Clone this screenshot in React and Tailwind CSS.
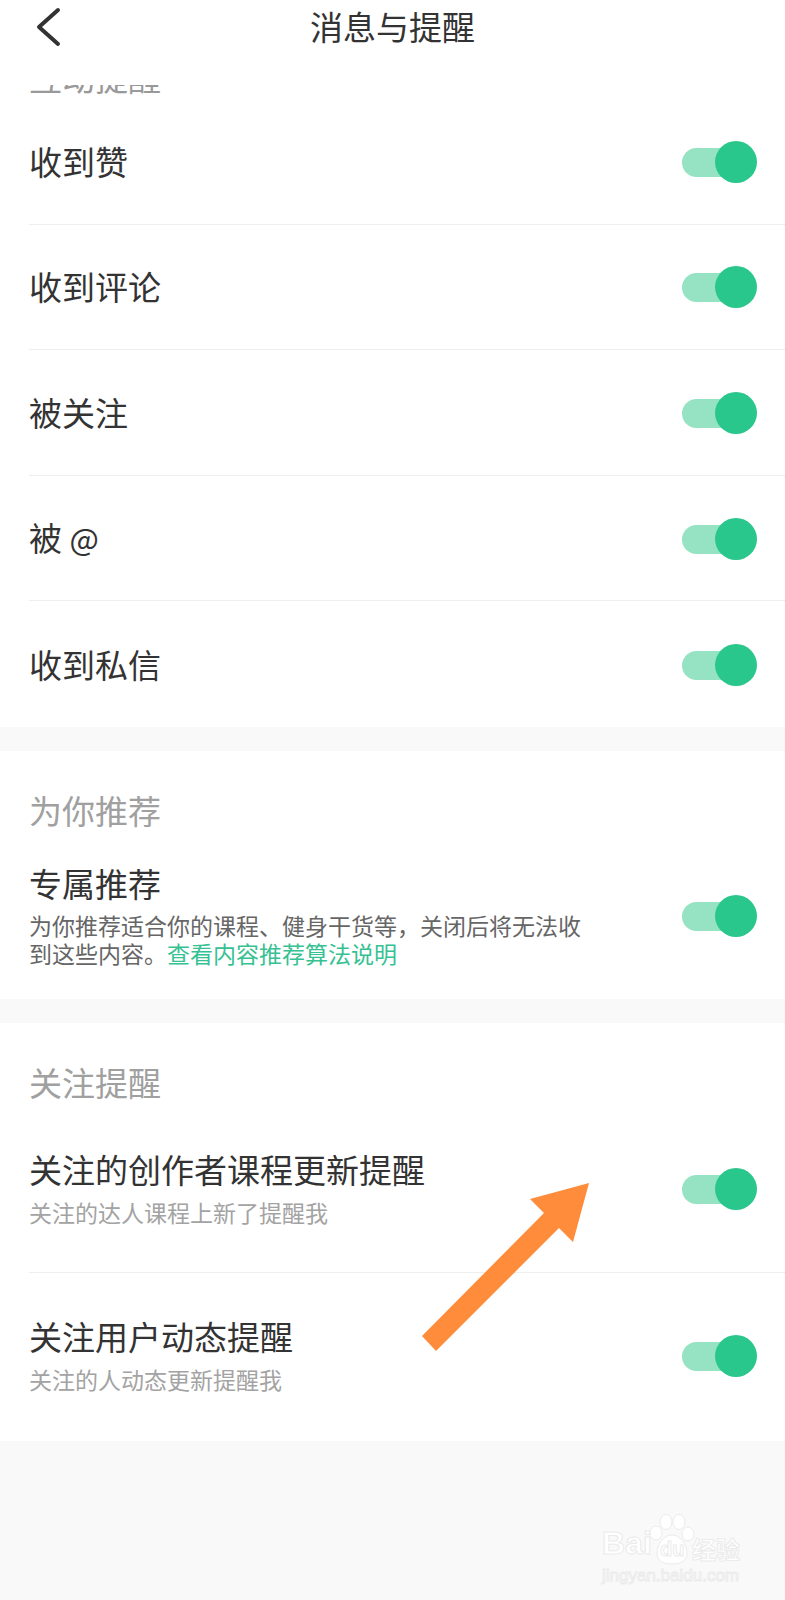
const FONT = '"Noto Sans CJK SC", "Noto Sans", sans-serif';

function Toggle({ className = '' }) {
  return (
    <div className={`relative h-[42px] w-[75px] shrink-0 ${className}`}>
      <div className="absolute left-0 top-[7px] h-[29px] w-[60px] rounded-full bg-[#95e3c3]" />
      <div className="absolute right-0 top-0 h-[42px] w-[42px] rounded-full bg-[#29c78b]" />
    </div>
  );
}

function SimpleRow({ label, last }) {
  return (
    <div className={`ml-[29px] flex h-[125.6px] items-center justify-between pr-[28px] pt-[1px] ${last ? '' : 'border-b border-[#eeeeee]'}`}>
      <span className="mb-[2px] text-[33px] leading-[44px] text-[#333333]">{label}</span>
      <Toggle />
    </div>
  );
}

function SubRow({ title, sub, className }) {
  return (
    <div className={`ml-[29px] flex items-center justify-between pr-[28px] ${className}`}>
      <div>
        <div className="text-[33px] leading-[44px] text-[#333333]">{title}</div>
        <div className="mt-[6px] text-[23px] leading-[30px] text-[#a3a3a3]">{sub}</div>
      </div>
      <Toggle className="mt-[4px]" />
    </div>
  );
}

export default function App() {
  return (
    <div className="relative flex h-[1600px] w-[785px] flex-col overflow-hidden bg-[#f9f9f9]" style={{ fontFamily: FONT }}>
      <header className="relative flex h-[85px] shrink-0 items-start justify-center bg-white">
        <svg className="absolute left-[34px] top-[6px]" width="30" height="44" viewBox="0 0 30 44" fill="none">
          <path d="M24 4 L5 21 L24 38" stroke="#333333" strokeWidth="4" strokeLinecap="round" strokeLinejoin="round" />
        </svg>
        <h1 className="mt-[2px] text-[33px] font-normal leading-[48px] text-[#333333]">消息与提醒</h1>
      </header>

      <section className="h-[642px] shrink-0 overflow-hidden bg-white">
        <div className="ml-[29px] mt-[-30px] h-[44px] text-[33px] leading-[44px] text-[#999999]">互动提醒</div>
        <SimpleRow label="收到赞" />
        <SimpleRow label="收到评论" />
        <SimpleRow label="被关注" />
        <SimpleRow label={<>被 <span className="text-[31px]">@</span></>} />
        <SimpleRow label="收到私信" last />
      </section>

      <section className="mt-[24px] h-[248px] shrink-0 bg-white pt-[37px]">
        <div className="ml-[29px] text-[33px] leading-[44px] text-[#a0a0a0]">为你推荐</div>
        <div className="ml-[29px] mt-[29px] flex items-center justify-between pr-[28px]">
          <div className="w-[552px]">
            <div className="text-[33px] leading-[44px] text-[#333333]">专属推荐</div>
            <p className="mt-[6px] text-[23px] leading-[28px] text-[#666666]">
              {'为你推荐适合你的课程、健身干货等\uFF0C关闭后将无法收到这些内容。'}<span className="text-[#36c193]">查看内容推荐算法说明</span>
            </p>
          </div>
          <Toggle className="mt-[4px]" />
        </div>
      </section>

      <section className="mt-[24px] h-[418px] shrink-0 bg-white pt-[37px]">
        <div className="ml-[29px] text-[33px] leading-[44px] text-[#a0a0a0]">关注提醒</div>
        <SubRow className="mt-[43px] border-b border-[#eeeeee] pb-[45px]" title="关注的创作者课程更新提醒" sub="关注的达人课程上新了提醒我" />
        <SubRow className="mt-[41px]" title="关注用户动态提醒" sub="关注的人动态更新提醒我" />
      </section>

      <svg className="absolute left-0 top-0" width="785" height="1600" viewBox="0 0 785 1600">
        <polygon fill="#ff8c3b" points="422,1336 436,1351 559,1228 573,1242 589,1183 530,1199 544,1213" />
      </svg>

      <div className="absolute left-[602px] top-[1514px] h-[74px] w-[142px] text-white" style={{ WebkitTextStroke: '1px #ebebeb' }}>
        <span className="absolute left-0 top-[11px] text-[32px] font-bold leading-[36px]" style={{ fontFamily: '"Liberation Sans", sans-serif' }}>Bai</span>
        <svg className="absolute left-[47px] top-0" width="46" height="52" viewBox="0 0 46 52" fill="#ffffff" stroke="#ebebeb" strokeWidth="1">
          <ellipse cx="7" cy="19" rx="6" ry="7" />
          <ellipse cx="17" cy="8" rx="6" ry="7.5" />
          <ellipse cx="30" cy="8" rx="6" ry="7.5" />
          <ellipse cx="39" cy="20" rx="6" ry="7" />
          <path d="M23 21 C31 21 38 30 38 39 C38 48 30 50 23 50 C15 50 8 48 8 39 C8 30 15 21 23 21 Z" />
        </svg>
        <span className="absolute left-[58px] top-[23px] text-[20px] font-bold leading-[24px]" style={{ fontFamily: '"Liberation Sans", sans-serif' }}>du</span>
        <span className="absolute left-[90px] top-[20px] text-[24px] font-bold leading-[30px]">经验</span>
        <span className="absolute left-0 top-[50px] text-[17px] leading-[24px]" style={{ fontFamily: '"Liberation Sans", sans-serif' }}>jingyan.baidu.com</span>
      </div>
    </div>
  );
}
